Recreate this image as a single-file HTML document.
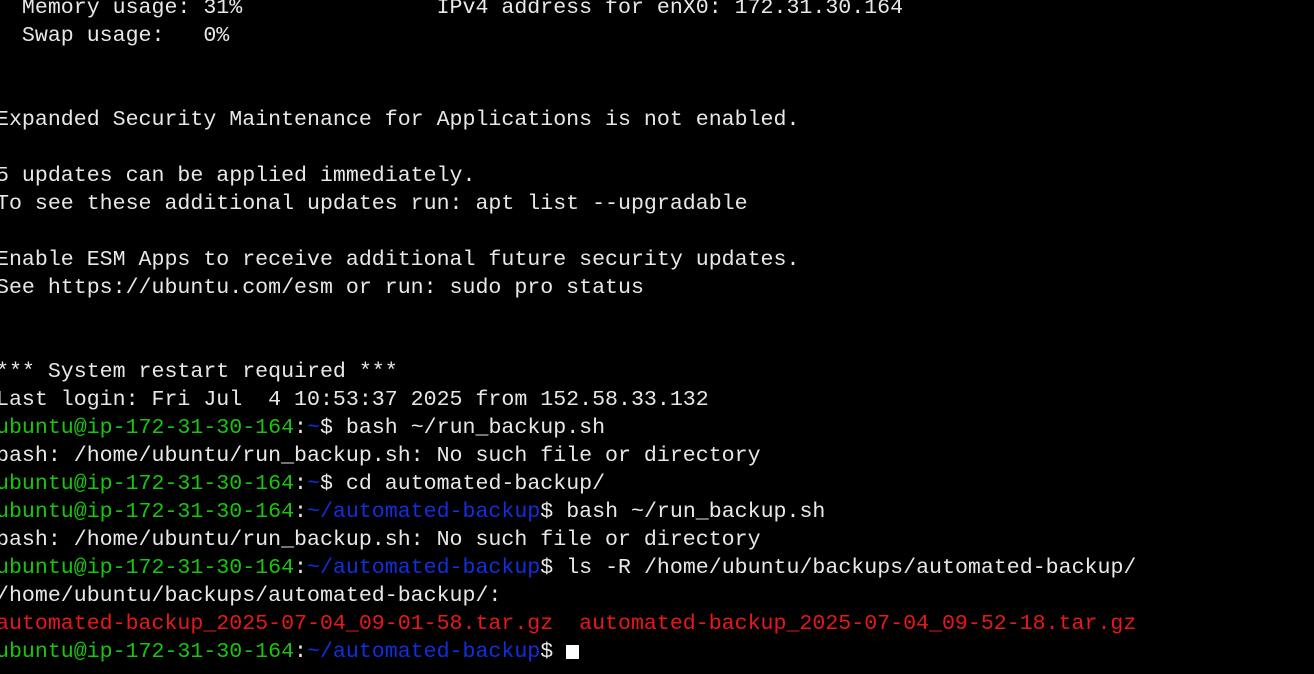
<!DOCTYPE html>
<html><head><meta charset="utf-8"><style>
html,body{margin:0;padding:0;background:#000;width:1314px;height:674px;overflow:hidden}
pre{position:absolute;left:-4px;top:-6px;margin:0;font-family:"Liberation Mono",monospace;font-size:21.6px;line-height:28px;color:#e8e8e8;white-space:pre}
.g{color:#16c60c}.b{color:#0f2fe0}.r{color:#e81818}
.cur{display:inline-block;width:13px;height:14px;background:#fff;vertical-align:-2px}
</style></head><body><pre>  Memory usage: 31%               IPv4 address for enX0: 172.31.30.164
  Swap usage:   0%


Expanded Security Maintenance for Applications is not enabled.

5 updates can be applied immediately.
To see these additional updates run: apt list --upgradable

Enable ESM Apps to receive additional future security updates.
See https://ubuntu.com/esm or run: sudo pro status


*** System restart required ***
Last login: Fri Jul  4 10:53:37 2025 from 152.58.33.132
<span class="g">ubuntu@ip-172-31-30-164</span>:<span class="b">~</span>$ bash ~/run_backup.sh
bash: /home/ubuntu/run_backup.sh: No such file or directory
<span class="g">ubuntu@ip-172-31-30-164</span>:<span class="b">~</span>$ cd automated-backup/
<span class="g">ubuntu@ip-172-31-30-164</span>:<span class="b">~/automated-backup</span>$ bash ~/run_backup.sh
bash: /home/ubuntu/run_backup.sh: No such file or directory
<span class="g">ubuntu@ip-172-31-30-164</span>:<span class="b">~/automated-backup</span>$ ls -R /home/ubuntu/backups/automated-backup/
/home/ubuntu/backups/automated-backup/:
<span class="r">automated-backup_2025-07-04_09-01-58.tar.gz</span>  <span class="r">automated-backup_2025-07-04_09-52-18.tar.gz</span>
<span class="g">ubuntu@ip-172-31-30-164</span>:<span class="b">~/automated-backup</span>$ <span class="cur"></span></pre></body></html>
